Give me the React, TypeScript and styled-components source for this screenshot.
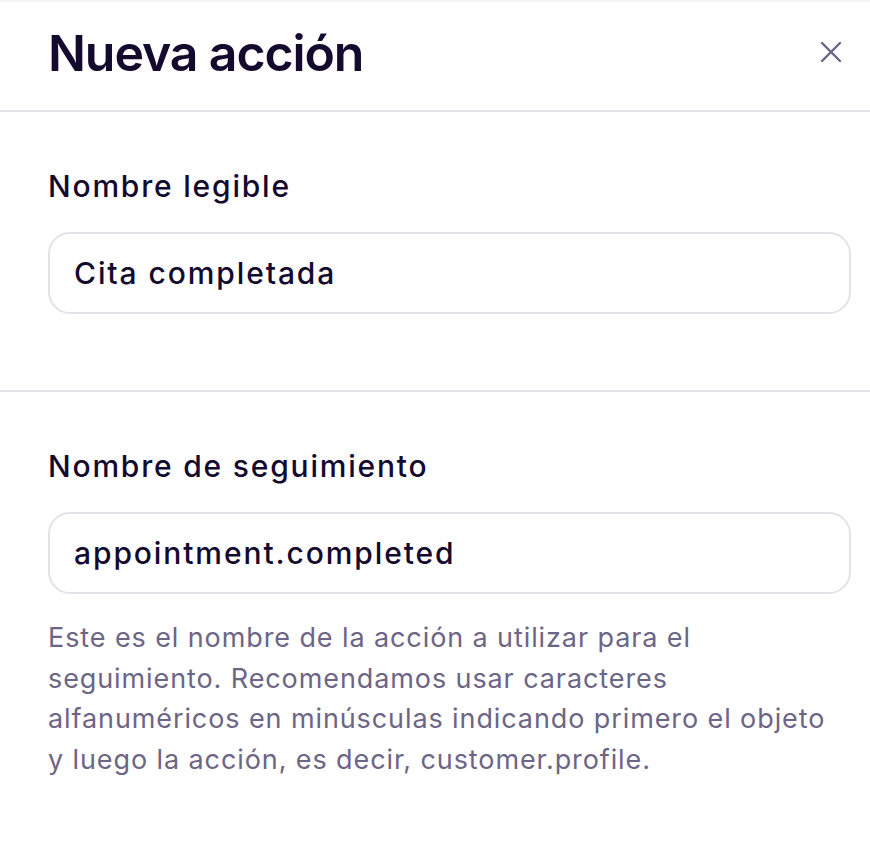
import styled, { createGlobalStyle } from "styled-components";

const GlobalStyle = createGlobalStyle`
  html, body {
    margin: 0;
    padding: 0;
    background: #ffffff;
  }
  body {
    font-family: Inter, "Noto Sans", "Liberation Sans", sans-serif;
    color: #140a2e;
  }
`;

const Panel = styled.div`
  width: 870px;
  height: 850px;
  background: #fff;
  box-shadow: inset 0 3px 3px -2px rgba(20, 10, 46, 0.08);
  overflow: hidden;
`;

const Header = styled.div`
  height: 110px;
  display: flex;
  align-items: center;
  justify-content: space-between;
  padding: 0 26px 0 48px;
  border-bottom: 2px solid #e5e3e9;
`;

const Title = styled.h1`
  margin: 0 0 4px;
  font-size: 50px;
  font-weight: 600;
  letter-spacing: -1.1px;
  color: #140a2e;
`;

const CloseButton = styled.button`
  border: none;
  background: none;
  padding: 0;
  margin-bottom: 6px;
  width: 26px;
  height: 26px;
  display: flex;
  align-items: center;
  justify-content: center;
  color: #6d6585;
  cursor: pointer;
`;

const Section = styled.div<{ $divider?: boolean }>`
  padding: 54px 19px 0 48px;
  height: ${(p) => (p.$divider ? "224px" : "auto")};
  border-bottom: ${(p) => (p.$divider ? "2px solid #e5e3e9" : "none")};
`;

const Label = styled.label`
  display: block;
  font-size: 30px;
  font-weight: 500;
  letter-spacing: 1.8px;
  line-height: 40px;
  color: #140a2e;
  margin-bottom: 26px;
`;

const Field = styled.div`
  height: 78px;
  border: 2px solid #e4e2e9;
  border-radius: 22px;
  display: flex;
  align-items: center;
  padding: 0 24px;
  font-size: 30px;
  font-weight: 500;
  letter-spacing: 1.9px;
  color: #140a2e;
`;

const Help = styled.p`
  margin: 24px 0 0;
  max-width: 795px;
  font-size: 27px;
  line-height: 40.5px;
  letter-spacing: 0.9px;
  color: #6d6585;
`;

export default function App() {
  return (
    <>
      <GlobalStyle />
      <Panel>
        <Header>
          <Title>Nueva acción</Title>
          <CloseButton aria-label="Cerrar">
            <svg width="22" height="22" viewBox="0 0 22 22" fill="none">
              <path d="M2 2L20 20M20 2L2 20" stroke="currentColor" strokeWidth="2.4" strokeLinecap="round" />
            </svg>
          </CloseButton>
        </Header>
        <Section $divider>
          <Label>Nombre legible</Label>
          <Field>Cita completada</Field>
        </Section>
        <Section>
          <Label>Nombre de seguimiento</Label>
          <Field>appointment.completed</Field>
          <Help>
            Este es el nombre de la acción a utilizar para el seguimiento. Recomendamos usar caracteres
            alfanuméricos en minúsculas indicando primero el objeto y luego la acción, es decir,
            customer.profile.
          </Help>
        </Section>
      </Panel>
    </>
  );
}
